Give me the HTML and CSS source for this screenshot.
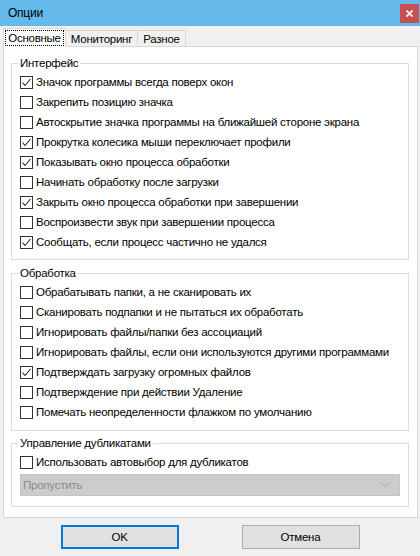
FILE: index.html
```html
<!DOCTYPE html>
<html lang="ru">
<head>
<meta charset="utf-8">
<title>Опции</title>
<link rel="stylesheet" href="styles.css">
</head>
<body>
<div class="window">
  <div class="titlebar">
    <span class="title">Опции</span>
    <span class="close"><svg width="7" height="7" viewBox="0 0 7 7"><path d="M0.5 0.5 L6.5 6.5 M6.5 0.5 L0.5 6.5" stroke="#fff" stroke-width="1.6"/></svg></span>
  </div>
  <div class="tabs">
    <div class="tab active"><span class="focus">Основные</span></div>
    <div class="tab">Мониторинг</div>
    <div class="tab">Разное</div>
  </div>
  <div class="panel">
    <fieldset class="group g1">
      <legend>Интерфейс</legend>
      <label class="row"><span class="cb on"><svg width="11" height="11" viewBox="0 0 11 11"><path d="M1.5 5.5 L4 8.5 L9.5 2" fill="none" stroke="#222" stroke-width="1.1"/></svg></span>Значок программы всегда поверх окон</label>
      <label class="row"><span class="cb"></span>Закрепить позицию значка</label>
      <label class="row"><span class="cb"></span>Автоскрытие значка программы на ближайшей стороне экрана</label>
      <label class="row"><span class="cb on"><svg width="11" height="11" viewBox="0 0 11 11"><path d="M1.5 5.5 L4 8.5 L9.5 2" fill="none" stroke="#222" stroke-width="1.1"/></svg></span>Прокрутка колесика мыши переключает профили</label>
      <label class="row"><span class="cb on"><svg width="11" height="11" viewBox="0 0 11 11"><path d="M1.5 5.5 L4 8.5 L9.5 2" fill="none" stroke="#222" stroke-width="1.1"/></svg></span>Показывать окно процесса обработки</label>
      <label class="row"><span class="cb"></span>Начинать обработку после загрузки</label>
      <label class="row"><span class="cb on"><svg width="11" height="11" viewBox="0 0 11 11"><path d="M1.5 5.5 L4 8.5 L9.5 2" fill="none" stroke="#222" stroke-width="1.1"/></svg></span>Закрыть окно процесса обработки при завершении</label>
      <label class="row"><span class="cb"></span>Воспроизвести звук при завершении процесса</label>
      <label class="row"><span class="cb on"><svg width="11" height="11" viewBox="0 0 11 11"><path d="M1.5 5.5 L4 8.5 L9.5 2" fill="none" stroke="#222" stroke-width="1.1"/></svg></span>Сообщать, если процесс частично не удался</label>
    </fieldset>
    <fieldset class="group g2">
      <legend>Обработка</legend>
      <label class="row"><span class="cb"></span>Обрабатывать папки, а не сканировать их</label>
      <label class="row"><span class="cb"></span>Сканировать подпапки и не пытаться их обработать</label>
      <label class="row"><span class="cb"></span>Игнорировать файлы/папки без ассоциаций</label>
      <label class="row"><span class="cb"></span>Игнорировать файлы, если они используются другими программами</label>
      <label class="row"><span class="cb on"><svg width="11" height="11" viewBox="0 0 11 11"><path d="M1.5 5.5 L4 8.5 L9.5 2" fill="none" stroke="#222" stroke-width="1.1"/></svg></span>Подтверждать загрузку огромных файлов</label>
      <label class="row"><span class="cb"></span>Подтверждение при действии Удаление</label>
      <label class="row"><span class="cb"></span>Помечать неопределенности флажком по умолчанию</label>
    </fieldset>
    <fieldset class="group g3">
      <legend>Управление дубликатами</legend>
      <label class="row"><span class="cb"></span>Использовать автовыбор для дубликатов</label>
      <div class="select">
        <span>Пропустить</span>
        <svg width="10" height="6" viewBox="0 0 10 6"><path d="M0.5 0.5 L5 5 L9.5 0.5" fill="none" stroke="#a8a8a8" stroke-width="1"/></svg>
      </div>
    </fieldset>
  </div>
  <div class="buttons">
    <div class="btn default">OK</div>
    <div class="btn">Отмена</div>
  </div>
</div>
</body>
</html>
```

FILE: styles.css
```css
* { box-sizing: border-box; }
html, body { margin: 0; padding: 0; }
body {
  width: 420px;
  height: 556px;
  background: #f0f0f0;
  font-family: "Liberation Sans", Arial, sans-serif;
  font-size: 11.5px;
  letter-spacing: -0.25px;
  color: #000;
  overflow: hidden;
}
.window { width: 420px; height: 556px; }
.titlebar {
  height: 26px;
  background: #65b9eb;
  display: flex;
  align-items: center;
  justify-content: space-between;
  padding-left: 8px;
  padding-right: 1px;
}
.title { font-size: 12px; color: #000; }
.close {
  width: 19px;
  height: 19px;
  background: #c75050;
  display: flex;
  align-items: center;
  justify-content: center;
}
.tabs {
  height: 20px;
  display: flex;
  align-items: flex-end;
  padding-left: 3px;
}
.tab {
  height: 16px;
  border: 1px solid #d9d9d9;
  border-bottom: none;
  background: #f0f0f0;
  display: flex;
  align-items: center;
  justify-content: center;
  line-height: 14px;
}
.tab:nth-child(2) { width: 72px; border-left: none; }
.tab:nth-child(3) { width: 48px; border-left: none; }
.tab.active {
  width: 63px;
  height: 19px;
  margin-bottom: -1px;
  background: #fff;
  position: relative;
  z-index: 1;
  align-items: flex-start;
  padding-top: 1px;
}
.focus {
  display: block;
  border: 1px dotted #000;
  padding: 0 2px;
  height: 16px;
  line-height: 14px;
  width: 59px;
  text-align: center;
}
.panel {
  margin-left: 3px;
  width: 415px;
  height: 472px;
  background: #fff;
  border: 1px solid #d9d9d9;
  padding: 8px 8px 0 7px;
  display: flex;
  flex-direction: column;
}
.group {
  margin: 0;
  border: 1px solid #dcdcdc;
  padding: 1px 8px 7px 8px;
  min-width: 0;
}
.group legend {
  padding: 0 2px;
  margin-left: -2px;
  line-height: 16px;
  height: 16px;
}
.g2 { margin-top: 5px; padding-bottom: 8px; }
.g3 { margin-top: 4px; padding-bottom: 10px; }
.row {
  display: flex;
  align-items: center;
  height: 20px;
  white-space: nowrap;
}
.cb {
  width: 13px;
  height: 13px;
  border: 1px solid #333;
  background: #fff;
  margin-right: 3px;
  flex: none;
  display: flex;
  align-items: center;
  justify-content: center;
}
.select {
  margin-top: 2px;
  height: 22px;
  background: #cccccc;
  border: 1px solid #c4c4c4;
  display: flex;
  align-items: center;
  justify-content: space-between;
  padding: 0 9px 0 2px;
  color: #8a8a8a;
}
.buttons {
  margin-top: 7px;
  display: flex;
  justify-content: center;
  gap: 63px;
}
.btn {
  width: 118px;
  height: 24px;
  background: #e1e1e1;
  border: 1px solid #adadad;
  display: flex;
  align-items: center;
  justify-content: center;
}
.btn.default { border: 2px solid #0078d7; }
```
